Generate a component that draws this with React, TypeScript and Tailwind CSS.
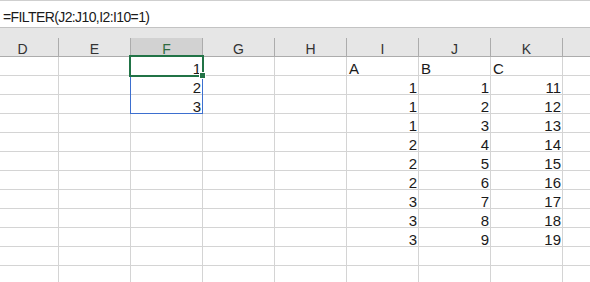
import React from 'react';

const columns = ['D', 'E', 'F', 'G', 'H', 'I', 'J', 'K', 'L'];

// cell values per row, keyed by column letter
const rows: Record<string, string>[] = [
    { F: '1', I: 'A', J: 'B', K: 'C' },
    { F: '2', I: '1', J: '1', K: '11' },
    { F: '3', I: '1', J: '2', K: '12' },
    { I: '1', J: '3', K: '13' },
    { I: '2', J: '4', K: '14' },
    { I: '2', J: '5', K: '15' },
    { I: '2', J: '6', K: '16' },
    { I: '3', J: '7', K: '17' },
    { I: '3', J: '8', K: '18' },
    { I: '3', J: '9', K: '19' },
    {},
    {},
];

const isNumber = (v: string) => /^\d+$/.test(v);

export default function App() {
    return (
        <div
            className="w-[590px] h-[282px] overflow-hidden bg-white text-[#1a1a1a]"
            style={{ fontFamily: '"Liberation Sans", Arial, sans-serif' }}
        >
            {/* Formula bar */}
            <div className="h-[28px] border-t border-b border-t-[#cfcfcf] border-b-[#c3c3c3] pl-[3px] pt-[9px]">
                <div className="text-[14px] leading-[14px] tracking-[-0.6px]">=FILTER(J2:J10,I2:I10=1)</div>
            </div>

            <div className="h-[10px] bg-[#e6e6e6]"></div>

            {/* Column headers (L is cut off at the right edge, its label not visible) */}
            <div className="flex bg-[#e6e6e6] -ml-[13px]">
                {columns.map((c) => (
                    <div
                        key={c}
                        className={
                            (c === 'L' ? 'flex-1 ' : 'w-[72px] shrink-0 border-r ') +
                            'h-[19px] border-b border-[#acacac] flex items-center justify-center pt-[3px] text-[14px] leading-none ' +
                            (c === 'F' ? 'bg-[#d2d2d2] text-[#2e6b3f]' : 'text-[#333333]')
                        }
                    >
                        {c === 'L' ? '' : c}
                    </div>
                ))}
            </div>

            {/* Grid */}
            <div className="relative">
                <div className="-ml-[13px]">
                    {rows.map((row, i) => (
                        <div key={i} className="flex">
                            {columns.map((c) => {
                                const v = row[c] ?? '';
                                return (
                                    <div
                                        key={c}
                                        className={
                                            (c === 'L' ? 'flex-1 ' : 'w-[72px] shrink-0 border-r ') +
                                            'h-[19px] border-b border-[#d4d4d4] flex items-end text-[15px] leading-[13px] ' +
                                            (isNumber(v) ? 'justify-end pr-[1px]' : 'justify-start pl-[2px]')
                                        }
                                    >
                                        {v}
                                    </div>
                                );
                            })}
                        </div>
                    ))}
                </div>

                {/* spill range outline */}
                <div className="absolute left-[130px] top-[18px] w-[73px] h-[39px] border border-[#3d6fcf]"></div>
                {/* active cell */}
                <div className="absolute left-[129px] top-[-2px] w-[75px] h-[22px] border-2 border-[#217346]"></div>
                <div className="absolute left-[200px] top-[16px] w-[5px] h-[5px] bg-[#217346] outline outline-1 outline-white"></div>
            </div>
        </div>
    );
}
